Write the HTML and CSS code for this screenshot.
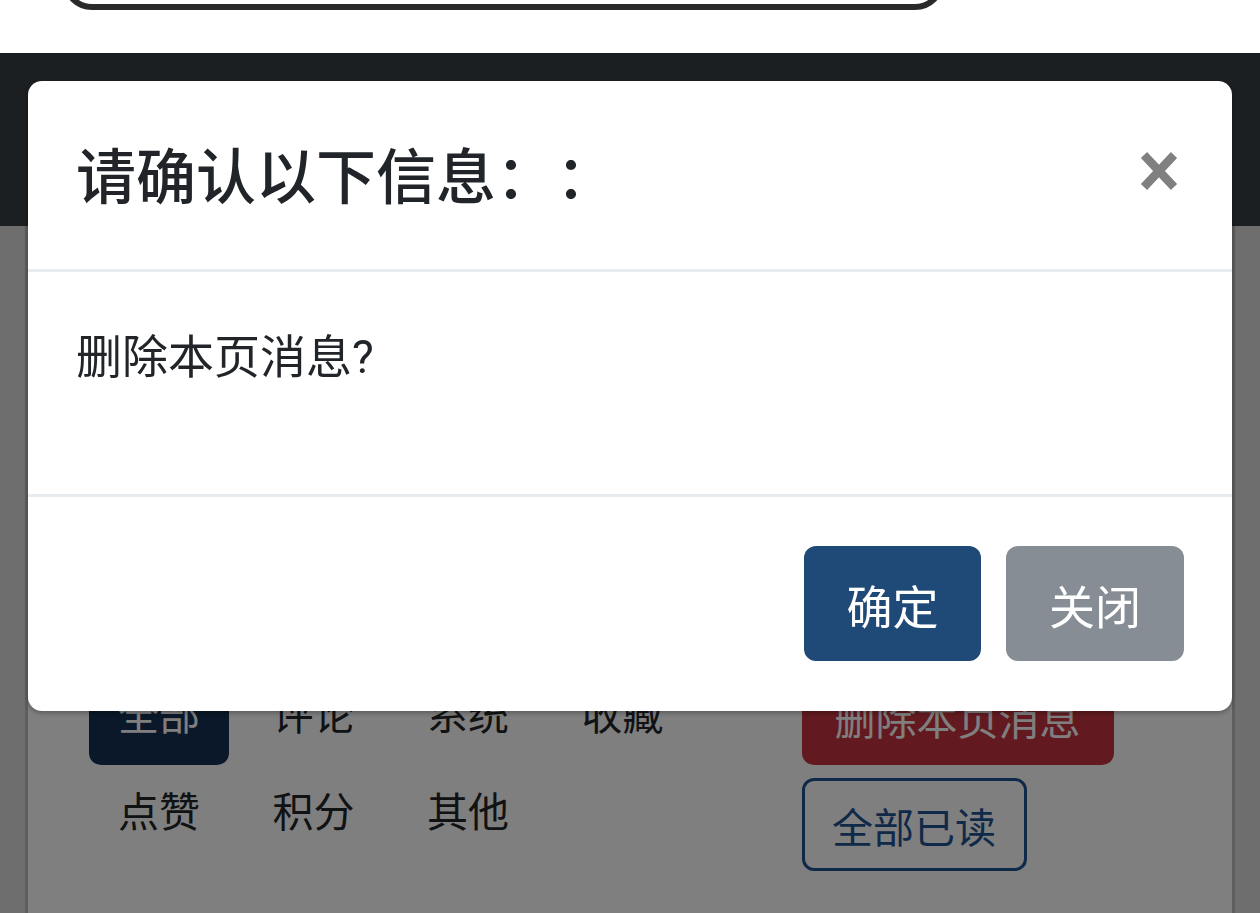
FILE: index.html
```html
<!DOCTYPE html>
<html lang="zh-CN">
<head>
  <meta charset="UTF-8">
  <meta name="viewport" content="width=device-width, initial-scale=1.0">
  <title>消息中心</title>
  <link rel="stylesheet" href="styles.css">
</head>
<body>
  <div class="topbar">
    <div class="search"></div>
  </div>
  <nav class="navbar"></nav>

  <main class="page">
    <div class="filters">
      <div class="tabs">
        <a class="tab active">全部</a>
        <a class="tab">评论</a>
        <a class="tab">系统</a>
        <a class="tab">收藏</a>
        <a class="tab">点赞</a>
        <a class="tab">积分</a>
        <a class="tab">其他</a>
      </div>
      <div class="actions">
        <button class="btn-danger">删除本页消息</button>
        <button class="btn-outline">全部已读</button>
      </div>
    </div>
  </main>

  <div class="backdrop"></div>

  <div class="modal">
    <div class="modal-header">
      <h5 class="modal-title">请确认以下信息：：</h5>
      <button class="close" aria-label="Close">
        <svg width="38" height="40" viewBox="0 0 38 40">
          <path d="M4 4 L34 36 M34 4 L4 36" stroke="#808080" stroke-width="8.5" fill="none"/>
        </svg>
      </button>
    </div>
    <div class="modal-body">
      <p>删除本页消息?</p>
    </div>
    <div class="modal-footer">
      <button class="btn btn-primary">确定</button>
      <button class="btn btn-secondary">关闭</button>
    </div>
  </div>
</body>
</html>
```

FILE: styles.css
```css
body {
  margin: 0;
  font-family: Roboto, "Noto Sans CJK SC", sans-serif;
  text-spacing-trim: space-all;
  background-color: #dcdcdc;
  color: #212529;
}

.topbar {
  height: 53px;
  background-color: #fff;
  overflow: hidden;
}

.search {
  margin: -50px 0 0 62px;
  width: 883px;
  height: 60px;
  box-sizing: border-box;
  border: 6px solid #2a2a2a;
  border-radius: 32px;
}

.navbar {
  height: 173px;
  background-color: #383e44;
}

.page {
  margin: 0 25px;
  min-height: 687px;
  box-sizing: border-box;
  padding: 442px 0 0 61px;
  background-color: #fff;
  border-left: 3px solid #bcbcbc;
  border-right: 3px solid #bcbcbc;
}

.filters {
  display: flex;
  gap: 109px;
}

.tabs {
  display: grid;
  grid-template-columns: repeat(4, 140px);
  grid-auto-rows: 97px;
  column-gap: 14.5px;
  align-content: start;
}

.tab {
  font-size: 41px;
  line-height: 97px;
  text-align: center;
  border-radius: 12px;
  color: #212529;
}

.tab.active {
  background-color: #143052;
  color: #fff;
}

.actions {
  display: flex;
  flex-direction: column;
  align-items: flex-start;
  gap: 13px;
}

.actions button {
  font-family: inherit;
  font-size: 41px;
  border-radius: 12px;
  cursor: pointer;
}

.btn-danger {
  height: 97px;
  padding: 0 33px;
  background-color: #c53541;
  color: #fff;
  border: none;
}

.btn-outline {
  height: 93px;
  padding: 0 27.5px;
  background-color: transparent;
  color: #1f5592;
  border: 3px solid #1f5592;
}

.backdrop {
  position: fixed;
  top: 53px;
  left: 0;
  right: 0;
  bottom: 0;
  background-color: rgba(0, 0, 0, 0.5);
}

.modal {
  position: fixed;
  top: 81px;
  left: 28px;
  width: 1204px;
  background-color: #fff;
  border-radius: 14px;
  box-shadow: 0 2px 5px rgba(0, 0, 0, 0.3);
}

.modal-header {
  height: 188px;
  padding: 0 54px 0 48px;
  display: flex;
  align-items: center;
  justify-content: space-between;
  border-bottom: 3px solid #e9ecef;
}

.modal-title {
  margin: 8px 0 0;
  font-size: 60px;
  font-weight: 500;
  line-height: 1.5;
}

.close {
  padding: 0;
  margin-bottom: 8px;
  background: none;
  border: none;
  display: flex;
}

.modal-body {
  height: 222px;
  box-sizing: border-box;
  padding: 51px 48px 0;
}

.modal-body p {
  margin: 0;
  font-size: 46px;
  line-height: 69px;
}

.modal-footer {
  display: flex;
  justify-content: flex-end;
  gap: 25px;
  padding: 49px 48px 50px;
  border-top: 3px solid #e9ecef;
}

.btn {
  height: 115px;
  padding: 0 42.5px;
  font-family: inherit;
  font-size: 46px;
  color: #fff;
  border: none;
  border-radius: 12px;
  cursor: pointer;
}

.btn-primary {
  background-color: #1f4a77;
}

.btn-secondary {
  padding: 0 43px;
  background-color: #878d94;
}
```
